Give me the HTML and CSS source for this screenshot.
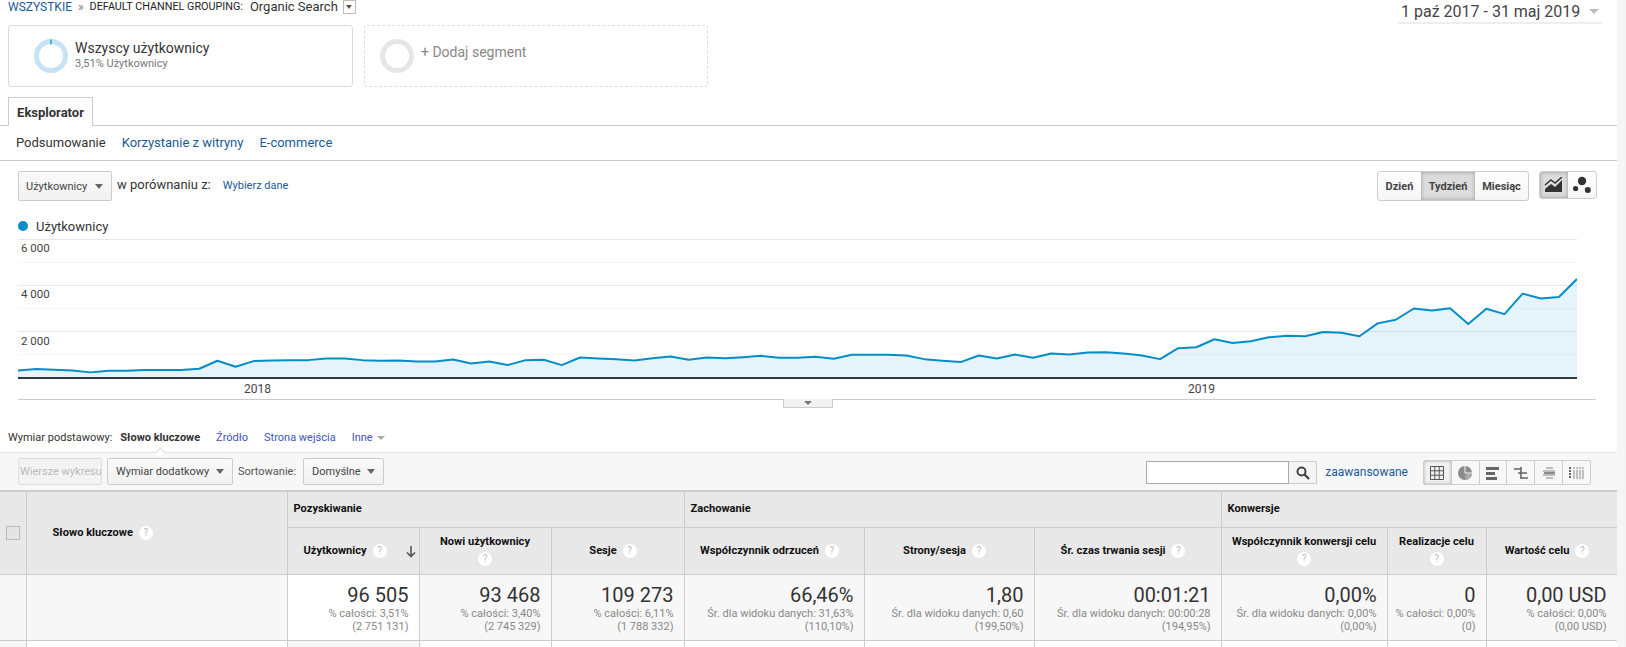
FILE: index.html
```html
<!doctype html>
<html lang="pl">
<head>
	<meta charset="utf-8">
	<title>Eksplorator</title>
	<link rel="stylesheet" href="styles.css">
</head>
<body>
<div class="page">

	<div class="topbar">
		<div class="crumbs">
			<a class="link">WSZYSTKIE</a>
			<span class="crumb-sep">»</span>
			<span class="crumb-caps">DEFAULT CHANNEL GROUPING:</span>
			<span class="crumb-val">Organic Search</span>
			<span class="crumb-drop"><i class="arrow"></i></span>
		</div>
		<div class="daterange">1 paź 2017 - 31 maj 2019<i class="arrow arrow-date"></i></div>
	</div>

	<div class="segments">
		<div class="segment">
			<svg class="ring" width="34" height="34" viewBox="0 0 34 34">
				<circle cx="17" cy="17" r="14.5" fill="none" stroke="#c6e3f3" stroke-width="5"/>
				<path d="M17 .5v5" stroke="#1a87c2" stroke-width="1.2"/>
			</svg>
			<div class="segment-text">
				<div class="segment-name">Wszyscy użytkownicy</div>
				<div class="segment-sub">3,51% Użytkownicy</div>
			</div>
		</div>
		<div class="segment segment-add">
			<svg class="ring" width="34" height="34" viewBox="0 0 34 34">
				<circle cx="17" cy="17" r="14.5" fill="none" stroke="#e6e6e6" stroke-width="5"/>
			</svg>
			<div class="segment-plus">+ Dodaj segment</div>
		</div>
	</div>

	<div class="tabs"><div class="tab">Eksplorator</div></div>

	<div class="subnav">
		<span>Podsumowanie</span>
		<a class="link">Korzystanie z witryny</a>
		<a class="link">E-commerce</a>
	</div>

	<div class="controls">
		<button class="btn btn-metric">Użytkownicy<i class="arrow"></i></button>
		<span class="compare">w porównaniu z:</span>
		<a class="link link-small">Wybierz dane</a>
		<div class="spacer"></div>
		<div class="btn-group">
			<div class="seg seg-day">Dzień</div>
			<div class="seg seg-week on">Tydzień</div>
			<div class="seg seg-month">Miesiąc</div>
		</div>
		<div class="btn-group btn-group-chart">
			<div class="seg seg-icon on">
				<svg width="20" height="16" viewBox="0 0 20 16"><path d="M1 15v-3l6-5 4 3 7-7v12z" fill="#333"/><path d="M1 8l6-5 4 3 7-6" fill="none" stroke="#333" stroke-width="1.500"/></svg>
			</div>
			<div class="seg seg-icon">
				<svg width="20" height="18" viewBox="0 0 20 18"><circle cx="10" cy="5" r="4.2" fill="#333"/><circle cx="3.6" cy="12.5" r="2.6" fill="#333"/><circle cx="15.8" cy="14" r="3" fill="#333"/></svg>
			</div>
		</div>
	</div>

	<div class="legend"><i class="dot"></i>Użytkownicy</div>

	<div class="chart">
		<i class="grid major"></i><i class="grid"></i><i class="grid major"></i><i class="grid"></i><i class="grid major"></i><i class="grid"></i>
		<svg class="plot" viewBox="0 87 86 420" preserveAspectRatio="none">
			<polygon fill="#0f8fcf" fill-opacity=".11" points="0,507 0,484 1,480 2,482 3,484 4,490 5,485 6,485 7,483 8,483 9,483 10,479 11,455 12,473 13,456 14,454 15,453 16,453 17,448 18,448 19,453 20,455 21,454 22,457 23,457 24,451 25,463 26,457 27,468 28,453 29,452 30,468 31,445 32,448 33,450 34,454 35,447 36,442 37,452 38,445 39,447 40,444 41,440 42,446 43,446 44,443 45,449 46,437 47,437 48,437 49,439 50,450 51,455 52,459 53,439 54,448 55,436 56,446 57,433 58,436 59,430 60,429 61,433 62,439 63,450 64,417 65,414 66,390 67,401 68,396 69,384 70,379 71,381 72,368 73,370 74,381 75,342 76,331 77,297 78,303 79,296 80,344 81,298 82,314 83,252 84,267 85,262 86,208 86,507"/>
			<polyline class="plot-line" points="0,484 1,480 2,482 3,484 4,490 5,485 6,485 7,483 8,483 9,483 10,479 11,455 12,473 13,456 14,454 15,453 16,453 17,448 18,448 19,453 20,455 21,454 22,457 23,457 24,451 25,463 26,457 27,468 28,453 29,452 30,468 31,445 32,448 33,450 34,454 35,447 36,442 37,452 38,445 39,447 40,444 41,440 42,446 43,446 44,443 45,449 46,437 47,437 48,437 49,439 50,450 51,455 52,459 53,439 54,448 55,436 56,446 57,433 58,436 59,430 60,429 61,433 62,439 63,450 64,417 65,414 66,390 67,401 68,396 69,384 70,379 71,381 72,368 73,370 74,381 75,342 76,331 77,297 78,303 79,296 80,344 81,298 82,314 83,252 84,267 85,262 86,208"/>
		</svg>
		<span class="ylabel y6">6 000</span>
		<span class="ylabel y4">4 000</span>
		<span class="ylabel y2">2 000</span>
	</div>

	<div class="xaxis">
		<span class="xlabel x18">2018</span>
		<span class="xlabel x19">2019</span>
		<div class="handle"><i class="arrow"></i></div>
	</div>

	<div class="dimensions">
		<span>Wymiar podstawowy:</span>
		<b class="dim-on">Słowo kluczowe</b>
		<a class="dim">Źródło</a>
		<a class="dim">Strona wejścia</a>
		<a class="dim">Inne<i class="arrow arrow-inne"></i></a>
	</div>

	<div class="toolbar">
		<button class="btn btn-off">Wiersze wykresu</button>
		<button class="btn btn-second">Wymiar dodatkowy<i class="arrow"></i></button>
		<span class="sort-label">Sortowanie:</span>
		<button class="btn btn-sort">Domyślne<i class="arrow"></i></button>
		<div class="spacer"></div>
		<div class="search">
			<div class="search-input"></div>
			<div class="search-btn">
				<svg width="14" height="14" viewBox="0 0 14 14"><circle cx="5.5" cy="5.5" r="4" fill="none" stroke="#444" stroke-width="2"/><path d="M8.5 8.5l4.5 4.5" stroke="#444" stroke-width="2.4"/></svg>
			</div>
		</div>
		<a class="link link-adv">zaawansowane</a>
		<div class="views">
			<div class="view on">
				<svg width="14" height="14" viewBox="0 0 14 14"><path d="M.5.5h13v13H.5zM.5 4.800h13M.5 9.200h13M4.800.5v13M9.200.5v13" fill="none" stroke="#555"/></svg>
			</div>
			<div class="view">
				<svg width="14" height="14" viewBox="0 0 14 14"><circle cx="7" cy="7" r="7" fill="#8a8a8a"/><path d="M7.500 7.500H14A7 7 0 0 1 7.500 14z" fill="#aaa"/><path d="M7 0v7h7" fill="none" stroke="#f7f7f7"/></svg>
			</div>
			<div class="view">
				<svg width="14" height="14" viewBox="0 0 14 14"><path d="M0 1h13v3H0zM0 6h9v3H0zM0 11h11v3H0z" fill="#666"/></svg>
			</div>
			<div class="view">
				<svg width="14" height="14" viewBox="0 0 14 14"><path d="M7 1v12M0 3h7M4 7h9M7 12h7" fill="none" stroke="#666" stroke-width="1.600"/></svg>
			</div>
			<div class="view">
				<svg width="14" height="14" viewBox="0 0 14 14"><path d="M4 2h7M1 5h12M1 9h12M4 12h7" fill="none" stroke="#aaa" stroke-width="1.500"/><path d="M2 7h11" stroke="#666" stroke-width="1.500"/></svg>
			</div>
			<div class="view">
				<svg width="15" height="14" viewBox="0 0 15 14"><path d="M1 1v12" stroke="#666" stroke-width="2" stroke-dasharray="2 1"/><path d="M5 1v12M8 1v12M11 1v12M14 1v12" stroke="#888" stroke-dasharray="2 1 10"/></svg>
			</div>
		</div>
	</div>

	<table class="report">
		<colgroup>
			<col class="c-check"><col class="c-key"><col class="c-users"><col class="c-new"><col class="c-ses">
			<col class="c-bounce"><col class="c-pages"><col class="c-time">
			<col class="c-conv"><col class="c-goal"><col class="c-value">
		</colgroup>
		<thead>
			<tr class="row-group">
				<th rowspan="2" class="cell-check"><i class="checkbox"></i></th>
				<th rowspan="2" class="cell-key">Słowo kluczowe<i class="help help-key">?</i></th>
				<th colspan="3" class="group">Pozyskiwanie</th>
				<th colspan="3" class="group">Zachowanie</th>
				<th colspan="3" class="group">Konwersje</th>
			</tr>
			<tr class="row-head">
				<th class="sorted">Użytkownicy<i class="help">?</i><svg class="sort-arrow" width="10" height="12" viewBox="0 0 10 12"><path d="M5 0v10M1 6.500l4 4 4-4" fill="none" stroke="#555" stroke-width="1.6"/></svg></th>
				<th>Nowi użytkownicy<br><i class="help help-under">?</i></th>
				<th>Sesje<i class="help">?</i></th>
				<th>Współczynnik odrzuceń<i class="help">?</i></th>
				<th>Strony/sesja<i class="help">?</i></th>
				<th>Śr. czas trwania sesji<i class="help">?</i></th>
				<th>Współczynnik konwersji celu<br><i class="help help-under">?</i></th>
				<th>Realizacje celu<br><i class="help help-under">?</i></th>
				<th>Wartość celu<i class="help">?</i></th>
			</tr>
		</thead>
		<tbody>
			<tr class="row-total">
				<td></td>
				<td></td>
				<td class="cell-white"><b>96 505</b>% całości: 3,51%<br>(2 751 131)</td>
				<td><b>93 468</b>% całości: 3,40%<br>(2 745 329)</td>
				<td><b>109 273</b>% całości: 6,11%<br>(1 788 332)</td>
				<td><b>66,46%</b>Śr. dla widoku danych: 31,63%<br>(110,10%)</td>
				<td><b>1,80</b>Śr. dla widoku danych: 0,60<br>(199,50%)</td>
				<td><b>00:01:21</b>Śr. dla widoku danych: 00:00:28<br>(194,95%)</td>
				<td><b>0,00%</b>Śr. dla widoku danych: 0,00%<br>(0,00%)</td>
				<td><b>0</b>% całości: 0,00%<br>(0)</td>
				<td><b>0,00 USD</b>% całości: 0,00%<br>(0,00 USD)</td>
			</tr>
			<tr class="row-next">
				<td class="cell-grey"></td><td></td><td class="cell-grey"></td><td></td><td></td><td></td><td></td><td></td><td></td><td></td><td></td>
			</tr>
		</tbody>
	</table>

</div>
</body>
</html>
```

FILE: styles.css
```css
html, body { margin: 0; height: 647px; overflow: hidden; background: #f5f5f5; }
body { font-family: Roboto, "Liberation Sans", sans-serif; color: #333; font-size: 12px; }
.page { width: 1617px; height: 647px; background: #fff; overflow: hidden; }
.link { color: #1a5a96; }
.spacer { flex: 1; }
.arrow { display: inline-block; width: 0; height: 0; border: 4px solid transparent; border-top: 5px solid #666; border-bottom: 0; }

/* top */
.topbar { display: flex; justify-content: space-between; height: 25px; padding: 0 15px 0 8px; }
.crumbs { display: flex; align-items: center; height: 13px; }
.crumbs .link { font-size: 12px; }
.crumb-sep { margin: 0 6px; color: #777; font-size: 12px; }
.crumb-caps { font-size: 10.800px; color: #222; }
.crumb-val { font-size: 13px; margin-left: 7px; color: #333; }
.crumb-drop { display: flex; align-items: center; justify-content: center; width: 11px; height: 12px; margin-left: 5px; border: 1px solid #bbb; }
.crumb-drop .arrow { border-width: 4px 3.500px 0; border-top-color: #555; }
.daterange { display: flex; align-items: center; width: 201px; height: 22px; padding-left: 3px; border-bottom: 2px solid #eee; font-size: 16px; color: #444; white-space: nowrap; }
.arrow-date { margin-left: 9px; border-width: 5px 5px 0; border-top-color: #bbb; }

/* segments */
.segments { display: flex; gap: 11px; padding: 0 8px; }
.segment { display: flex; align-items: center; box-sizing: border-box; width: 345px; height: 62px; padding-left: 25px; border: 1px solid #ddd; border-radius: 3px; }
.segment-add { width: 344px; padding-left: 15px; border-style: dashed; }
.ring { margin-right: 7px; flex: none; }
.segment-text { margin-top: -2px; }
.segment-name { font-size: 14px; line-height: 16px; color: #333; }
.segment-sub { font-size: 11px; line-height: 15px; color: #777; }
.segment-plus { font-size: 14px; color: #888; margin: -9px 0 0 0; }

/* tabs */
.tabs { height: 28px; margin-top: 10px; padding-left: 8px; border-bottom: 1px solid #ccc; }
.tab { box-sizing: border-box; width: 85px; height: 29px; padding-top: 7px; text-align: center; font-size: 13px; font-weight: 700; background: #fff; border: 1px solid #ccc; border-bottom: 0; }
.subnav { display: flex; gap: 16px; align-items: center; box-sizing: border-box; height: 35px; padding: 0 0 2px 16px; border-bottom: 1px solid #ccc; font-size: 13px; }

/* chart controls */
.controls { display: flex; align-items: flex-start; height: 30px; padding: 10px 20px 0 18px; }
.btn { box-sizing: border-box; display: flex; align-items: center; justify-content: space-between; height: 27px; padding: 0 8px; font-family: inherit; font-size: 11px; color: #444; background: linear-gradient(#fafafa, #f1f1f1); border: 1px solid #ccc; border-radius: 2px; white-space: nowrap; }
.btn-metric { width: 94px; height: 30px; padding-left: 7px; }
.compare { margin: 6px 0 0 5px; font-size: 13px; color: #333; }
.link-small { margin: 8px 0 0 12px; font-size: 11px; }
.btn-group { display: flex; height: 30px; box-sizing: border-box; border: 1px solid #ccc; border-radius: 3px; background: linear-gradient(#fff, #f5f5f5); overflow: hidden; }
.btn-group-chart { height: 28px; margin-left: 10px; }
.seg { display: flex; align-items: center; justify-content: center; box-sizing: border-box; height: 100%; font-size: 11px; font-weight: 700; color: #444; }
.seg.on { background: #dcdcdc; box-shadow: inset 0 0 4px #999; }
.seg-day { width: 43px; }
.seg-week { width: 54px; }
.seg-month { width: 53px; }
.seg-icon { width: 28px; }

.legend { display: flex; align-items: center; height: 16px; margin: 17px 0 5px 18px; font-size: 13px; color: #333; }
.dot { width: 10px; height: 10px; margin-right: 8px; border-radius: 50%; background: #058dc7; }

.chart { position: relative; display: flex; flex-direction: column; height: 138px; margin: 0 40px 0 18px; border-bottom: 2px solid #333; }
.grid { display: block; box-sizing: border-box; height: 23.1px; border-top: 1px solid #f6f6f6; flex: none; }
.grid.major { border-top-color: #e8e8e8; }
.plot { position: absolute; left: 0; top: 0; width: 100%; height: 139px; }
.plot-line { fill: none; stroke: #058dc7; stroke-width: 2px; vector-effect: non-scaling-stroke; stroke-linejoin: round; }
.ylabel { position: absolute; left: 3px; font-size: 11.500px; color: #444; }
.y6 { top: 2px; }
.y4 { top: 48px; }
.y2 { top: 95px; }

.xaxis { position: relative; height: 20px; margin: 0 21px 0 18px; border-bottom: 1px solid #ccc; font-size: 12px; color: #444; }
.xlabel { position: absolute; top: 3px; }
.x18 { left: 226px; }
.x19 { left: 1170px; }
.handle { position: absolute; left: 765px; top: 20px; box-sizing: border-box; display: flex; align-items: center; justify-content: center; width: 50px; height: 9px; background: #f1f1f1; border: 1px solid #ccc; border-top: 0; }
.handle .arrow { border-width: 4px 4px 0; border-top-color: #777; }

/* dimensions */
.dimensions { position: relative; display: flex; align-items: center; height: 15px; margin-top: 30px; padding: 0 0 7px 8px; font-size: 11px; color: #333; border-bottom: 1px solid #e4e4e4; }
.dimensions b { margin: 0 16px 0 8px; }
.dim { margin-right: 16px; color: #3f55b5; }
.dim-on::after { content: ""; position: absolute; left: 157px; bottom: -1px; width: 6px; height: 6px; border-left: 1px solid #ddd; border-top: 1px solid #ddd; background: #fff; transform: translateY(3px) rotate(45deg); }
.arrow-inne { margin-left: 4px; border-width: 4px 4px 0; border-top-color: #aaa; vertical-align: 1px; }

.toolbar { display: flex; align-items: flex-start; box-sizing: border-box; height: 37px; padding: 5px 26px 0 18px; background: #f7f7f7; }
.toolbar .btn { font-size: 11px; }
.btn-off { width: 84px; padding: 0 1px; color: #bbb; background: #f3f3f3; border-color: #ddd; overflow: hidden; }
.btn-second { width: 126px; margin-left: 5px; }
.sort-label { margin: 7px 0 0 5px; font-size: 11px; color: #555; }
.btn-sort { width: 81px; margin-left: 7px; }
.search { display: flex; height: 23px; margin-top: 3px; }
.search-input { box-sizing: border-box; width: 143px; background: #fff; border: 1px solid #aaa; }
.search-btn { display: flex; align-items: center; justify-content: center; box-sizing: border-box; width: 28px; border: 1px solid #ccc; border-left: 0; background: #f5f5f5; }
.link-adv { margin: 7px 15px 0 8px; font-size: 12px; }
.views { display: flex; box-sizing: border-box; width: 168px; height: 25px; margin-top: 2px; border: 1px solid #ccc; border-radius: 2px; }
.view { display: flex; flex: 1; align-items: center; justify-content: center; box-sizing: border-box; border-left: 1px solid #ccc; }
.view:first-child { border-left: 0; }
.view.on { background: #f1f1f1; box-shadow: inset 0 0 3px #aaa; }

/* report table */
.report { table-layout: fixed; width: 1617px; border-collapse: collapse; border-top: 2px solid #ccc; font-size: 11px; }
.report th, .report td { border: 1px solid #ccc; padding: 0; }
.report th:first-child, .report td:first-child { border-left: 0; }
.c-check { width: 26px; }
.c-key { width: 261px; }
.c-users, .c-new { width: 132px; }
.c-ses { width: 133px; }
.c-bounce { width: 180px; }
.c-pages { width: 170px; }
.c-time { width: 187px; }
.c-conv { width: 166px; }
.c-goal { width: 99px; }
.c-value { width: 131px; }
thead th { background: #e8e8e8; color: #111; font-size: 11.100px; font-weight: 700; vertical-align: middle; line-height: 14px; }
.row-group { height: 36px; }
.row-head { height: 47px; }
.group { text-align: left; padding-left: 6px !important; }
.cell-key { text-align: left; padding-left: 26px !important; }
.checkbox { display: block; width: 12px; height: 12px; margin: 0 auto; border: 1px solid #bbb; background: #e4e4e4; }
.help { display: inline-block; width: 14px; height: 14px; margin: 0 9px 0 6px; border-radius: 50%; background: #fff; color: #bbb; font-style: normal; font-size: 10px; line-height: 14px; text-align: center; font-weight: 400; vertical-align: 0; }
.help-key { margin: 0 0 0 6px; }
.help-under { margin: 3px 0 0; }
.sorted { position: relative; padding-right: 7px !important; }
.sort-arrow { position: absolute; right: 3px; top: 18px; }
.row-total { height: 66px; }
.row-total td { background: #f7f7f7; text-align: right; padding-right: 10px; vertical-align: top; color: #888; line-height: 13px; }
.row-total td:nth-child(-n+2) { padding: 0; }
.row-total b { display: block; margin-top: 8px; font-size: 20px; line-height: 24px; font-weight: 400; color: #333; }
.row-total .cell-white { background: #fff; }
.row-next { height: 10px; }
.cell-grey { background: #f7f7f7; }
```
